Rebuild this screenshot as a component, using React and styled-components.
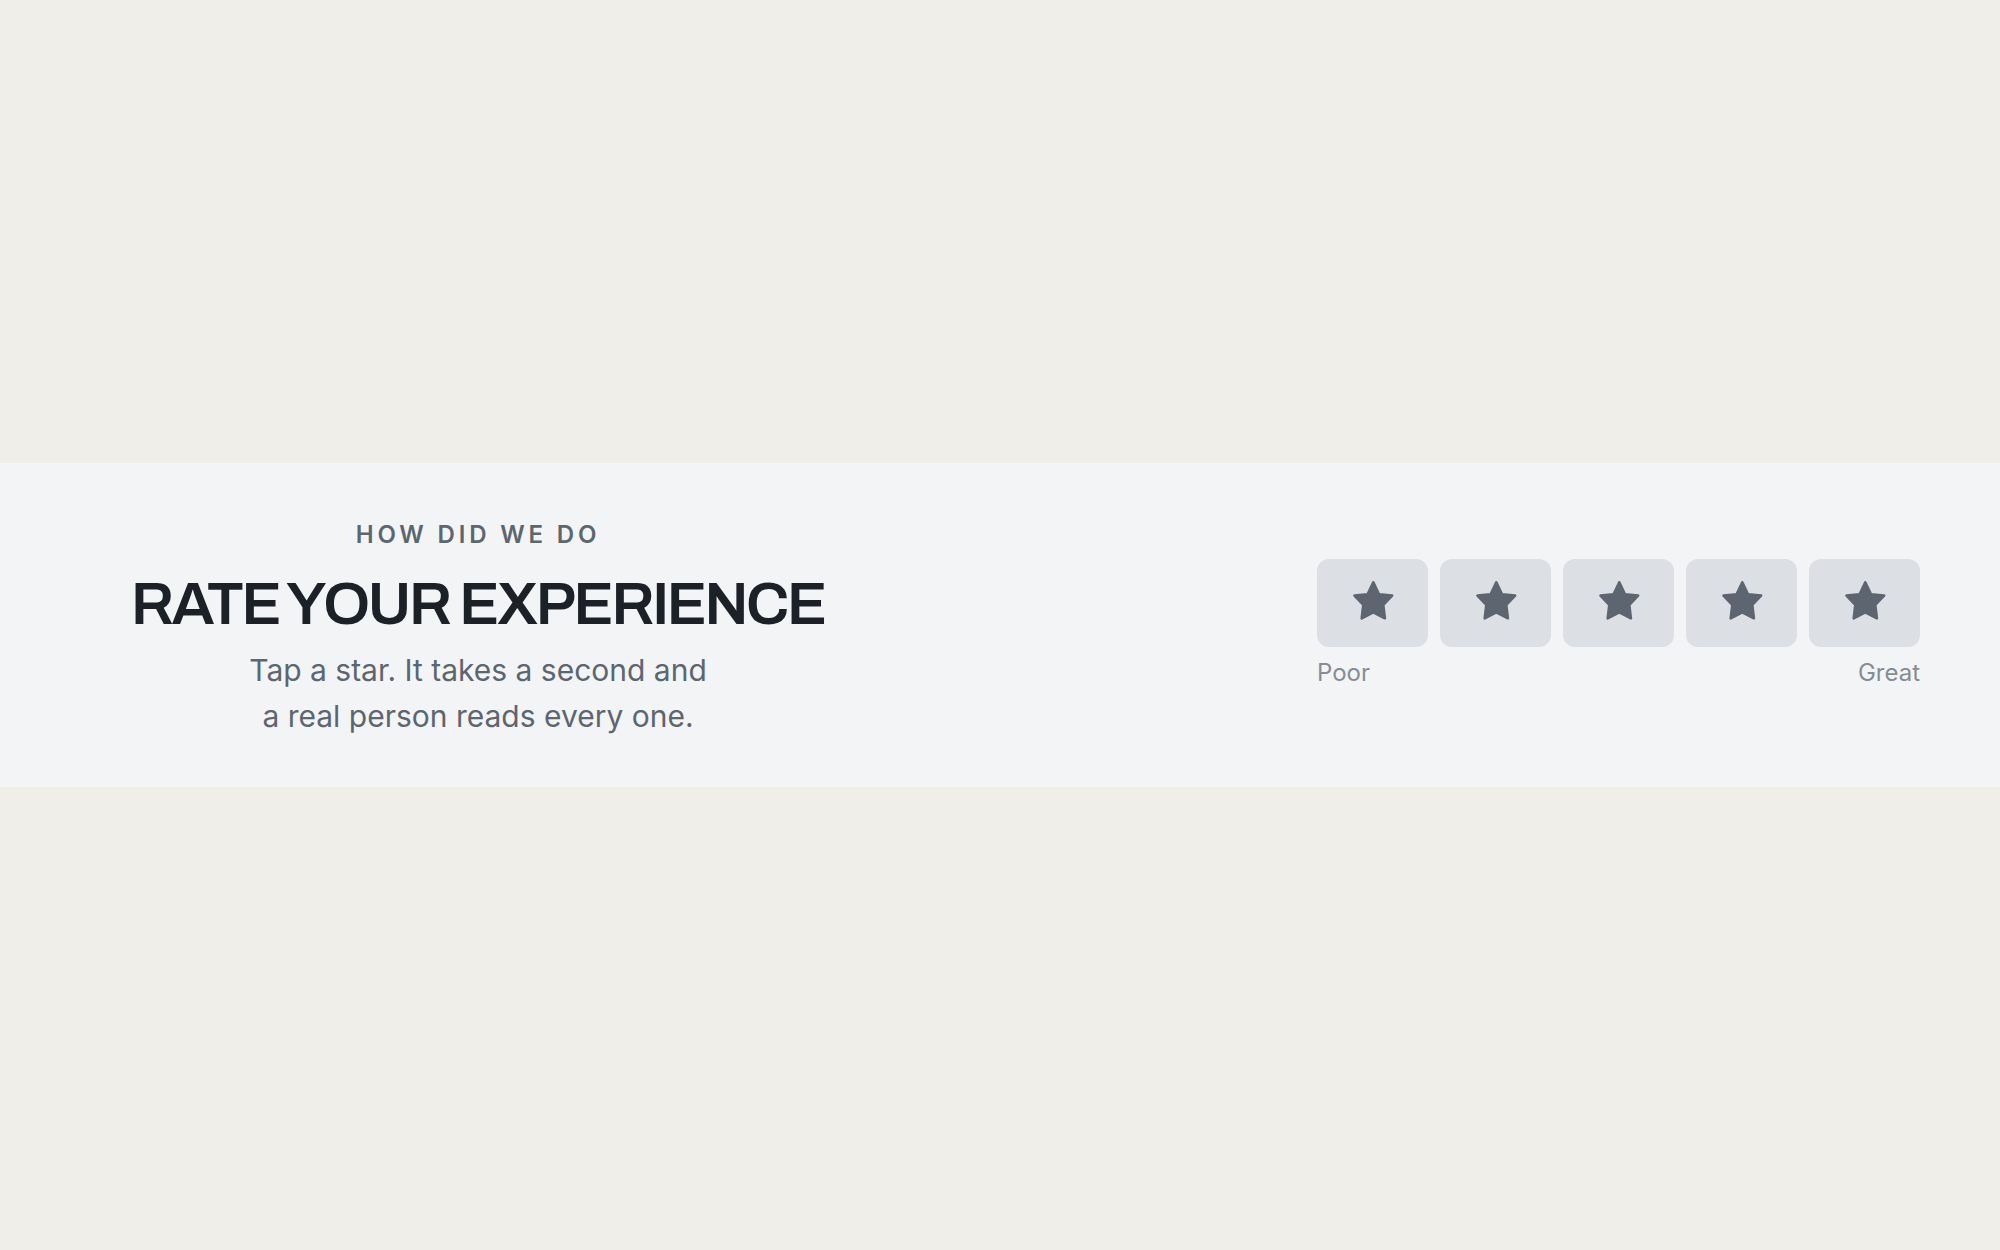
import React from "react";
import styled, { createGlobalStyle } from "styled-components";

const GlobalStyle = createGlobalStyle`
  *, *::before, *::after { box-sizing: border-box; }
  body {
    margin: 0;
    background: #efeee9;
    font-family: Inter, "Liberation Sans", sans-serif;
    -webkit-font-smoothing: antialiased;
  }
`;

const Page = styled.main`
  min-height: 100vh;
  display: flex;
  flex-direction: column;
  justify-content: center;
`;

const Panel = styled.section`
  display: flex;
  flex-wrap: wrap;
  align-items: center;
  justify-content: space-between;
  gap: 48px;
  padding: 48px 80px;
  background: #f3f4f6;
`;

const Intro = styled.header`
  flex: 0 1 796px;
  text-align: center;
`;

const Eyebrow = styled.p`
  margin: 0 0 14px;
  font-size: 24px;
  line-height: 48px;
  font-weight: 600;
  letter-spacing: 0.16em;
  text-transform: uppercase;
  color: #5c6670;
`;

const Title = styled.h1`
  margin: 0 0 12px;
  font-family: Archivo, "Liberation Sans", sans-serif;
  font-size: 60px;
  line-height: 62px;
  font-weight: 600;
  letter-spacing: -0.04em;
  text-transform: uppercase;
  color: #1c2127;
`;

const Description = styled.p`
  max-width: 480px;
  margin: 0 auto;
  font-size: 30px;
  line-height: 46px;
  color: #5c6670;
`;

const Rating = styled.div`
  flex: 0 1 603px;
`;

const Stars = styled.div`
  display: grid;
  grid-template-columns: repeat(5, 1fr);
  gap: 12px;
`;

const StarButton = styled.button`
  display: flex;
  align-items: center;
  justify-content: center;
  height: 88px;
  padding: 0;
  border: 0;
  border-radius: 12px;
  background: #dcdfe4;
  color: #5c6570;
  cursor: pointer;
`;

const Scale = styled.div`
  display: flex;
  justify-content: space-between;
  margin-top: 8px;
  font-size: 24px;
  line-height: 36px;
  color: #858c94;
`;

const StarIcon = () => (
  <svg width="44" height="44" viewBox="0 0 44 44" aria-hidden="true">
    <path
      d="M22.3 1.3L28 13.2L41.1 14.6L32.3 23.8L33.9 37.3L22.3 31.3L10.7 37.3L12.3 23.8L3.5 14.6L16.6 13.2Z"
      fill="currentColor"
      stroke="currentColor"
      strokeWidth="2.6"
      strokeLinejoin="round"
    />
  </svg>
);

export default function App() {
  return (
    <>
      <GlobalStyle />
      <Page>
        <Panel>
          <Intro>
            <Eyebrow>How did we do</Eyebrow>
            <Title>Rate your experience</Title>
            <Description>Tap a star. It takes a second and a real person reads every one.</Description>
          </Intro>
          <Rating>
            <Stars role="group" aria-label="Rating">
              {[1, 2, 3, 4, 5].map((n) => (
                <StarButton key={n} type="button" aria-label={`${n} of 5`}>
                  <StarIcon />
                </StarButton>
              ))}
            </Stars>
            <Scale>
              <span>Poor</span>
              <span>Great</span>
            </Scale>
          </Rating>
        </Panel>
      </Page>
    </>
  );
}
